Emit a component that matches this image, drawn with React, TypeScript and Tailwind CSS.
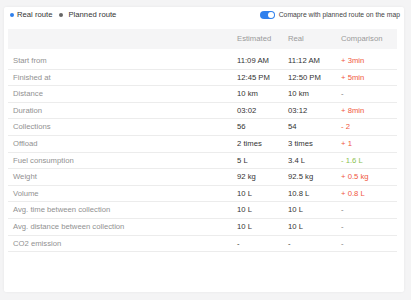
import React from "react";

type Row = { label: string; est: string; real: string; cmp: string; tone?: "red" | "green" | "none" };

const rows: Row[] = [
  { label: "Start from", est: "11:09 AM", real: "11:12 AM", cmp: "+ 3min", tone: "red" },
  { label: "Finished at", est: "12:45 PM", real: "12:50 PM", cmp: "+ 5min", tone: "red" },
  { label: "Distance", est: "10 km", real: "10 km", cmp: "-", tone: "none" },
  { label: "Duration", est: "03:02", real: "03:12", cmp: "+ 8min", tone: "red" },
  { label: "Collections", est: "56", real: "54", cmp: "- 2", tone: "red" },
  { label: "Offload", est: "2 times", real: "3 times", cmp: "+ 1", tone: "red" },
  { label: "Fuel consumption", est: "5 L", real: "3.4 L", cmp: "- 1.6 L", tone: "green" },
  { label: "Weight", est: "92 kg", real: "92.5 kg", cmp: "+ 0.5 kg", tone: "red" },
  { label: "Volume", est: "10 L", real: "10.8 L", cmp: "+ 0.8 L", tone: "red" },
  { label: "Avg. time between collection", est: "10 L", real: "10 L", cmp: "-", tone: "none" },
  { label: "Avg. distance between collection", est: "10 L", real: "10 L", cmp: "-", tone: "none" },
  { label: "CO2 emission", est: "-", real: "-", cmp: "-", tone: "none" },
];

const toneClass = (t?: string) =>
  t === "red" ? "text-[#f0583e]" : t === "green" ? "text-[#8cc152]" : "text-[#777777]";

export default function App() {
  return (
    <div
      className="w-[411px] h-[300px] bg-[#f4f4f5] pt-[7px] pl-[4px] overflow-hidden"
      style={{ fontFamily: "'Liberation Sans', Arial, sans-serif" }}
    >
      <div className="w-[400px] h-[285px] bg-white rounded-[2px] shadow-[0_0_3px_rgba(0,0,0,0.06)] px-[4px]">
        <div className="h-[16px] flex items-center justify-between text-[7.7px] text-[#333333]">
          <div className="flex items-center">
            <span className="ml-[2px] w-[4px] h-[4px] rounded-full bg-[#2f80ed]" />
            <span className="ml-[3px]">Real route</span>
            <span className="ml-[7px] w-[4px] h-[4px] rounded-full bg-[#666666]" />
            <span className="ml-[5px]">Planned route</span>
          </div>
          <div className="flex items-center">
            <span className="relative w-[15px] h-[8px] rounded-full bg-[#2f80ed]">
              <span className="absolute right-[1px] top-[1px] w-[6px] h-[6px] rounded-full bg-white" />
            </span>
            <span className="ml-[4px] text-[6.8px] text-[#444444]">Comapre with planned route on the map</span>
          </div>
        </div>
        <div className="mt-[6px] w-[389px]">
          <div className="grid grid-cols-[224px_51px_53px_1fr] h-[20px] items-center bg-[#f5f5f6] text-[7.7px] text-[#9a9a9a]">
            <div />
            <div className="pl-[5px]">Estimated</div>
            <div className="pl-[5px]">Real</div>
            <div className="pl-[5px]">Comparison</div>
          </div>
          <div className="h-[4px]" />
          {rows.map((r) => (
            <div
              key={r.label}
              className="grid grid-cols-[224px_51px_53px_1fr] h-[16.6px] items-center border-b border-[#ececec] text-[7.7px]"
            >
              <div className="pl-[5px] text-[#919191]">{r.label}</div>
              <div className="pl-[5px] text-[#333333]">{r.est}</div>
              <div className="pl-[5px] text-[#333333]">{r.real}</div>
              <div className={`pl-[5px] ${toneClass(r.tone)}`}>{r.cmp}</div>
            </div>
          ))}
        </div>
      </div>
    </div>
  );
}
